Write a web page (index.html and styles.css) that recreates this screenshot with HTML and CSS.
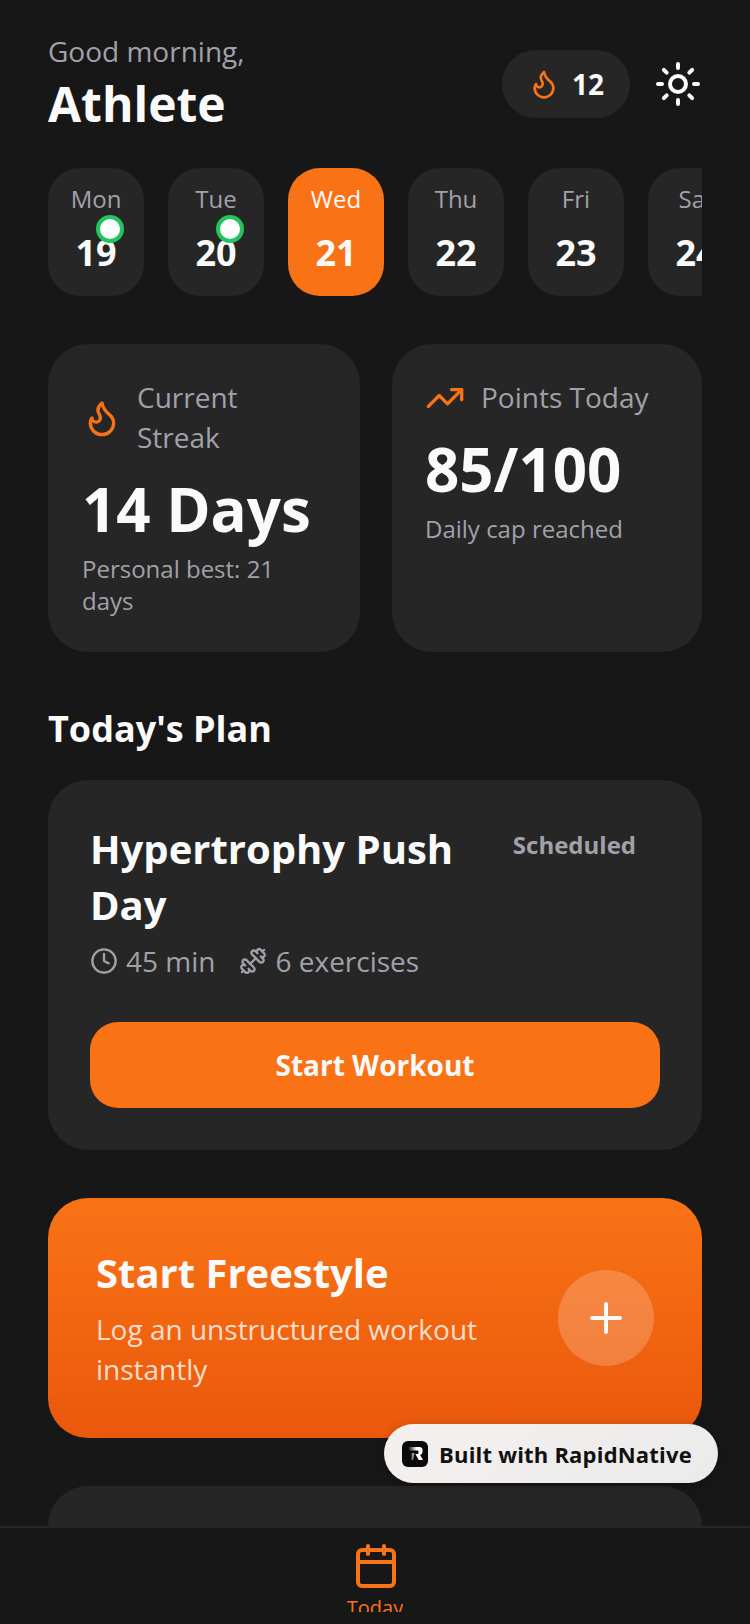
FILE: index.html
```html
<!DOCTYPE html>
<html lang="en">
<head>
<meta charset="utf-8">
<title>Today</title>
<link rel="stylesheet" href="styles.css">
</head>
<body>
<div class="app">
  <main class="content">
    <header class="header">
      <div class="greeting">
        <div class="greeting-top">Good morning,</div>
        <div class="greeting-name">Athlete</div>
      </div>
      <div class="header-actions">
        <div class="streak-pill">
          <svg class="icon i32 orange" viewBox="0 0 24 24"><path d="M8.5 14.5A2.5 2.5 0 0 0 11 12c0-1.38-.5-2-1-3-1.072-2.143-.224-4.054 2-6 .5 2.5 2 4.9 4 6.5 2 1.6 3 3.5 3 5.5a7 7 0 1 1-14 0c0-1.153.433-2.294 1-3a2.5 2.5 0 0 0 2.5 2.5z"/></svg>
          <span class="streak-count">12</span>
        </div>
        <svg class="icon i48 white" viewBox="0 0 24 24"><circle cx="12" cy="12" r="4"/><path d="M12 2v2"/><path d="M12 20v2"/><path d="m4.93 4.93 1.41 1.41"/><path d="m17.66 17.66 1.41 1.41"/><path d="M2 12h2"/><path d="M20 12h2"/><path d="m6.34 17.66-1.41 1.41"/><path d="m19.07 4.93-1.41 1.41"/></svg>
      </div>
    </header>

    <div class="days">
      <div class="day"><span class="day-label">Mon</span><span class="day-num">19</span><span class="day-dot"></span></div>
      <div class="day"><span class="day-label">Tue</span><span class="day-num">20</span><span class="day-dot"></span></div>
      <div class="day day-active"><span class="day-label">Wed</span><span class="day-num">21</span></div>
      <div class="day"><span class="day-label">Thu</span><span class="day-num">22</span></div>
      <div class="day"><span class="day-label">Fri</span><span class="day-num">23</span></div>
      <div class="day"><span class="day-label">Sat</span><span class="day-num">24</span></div>
    </div>

    <section class="stats">
      <div class="stat-card stat-card-wide">
        <div class="stat-head">
          <svg class="icon i40 orange" viewBox="0 0 24 24"><path d="M8.5 14.5A2.5 2.5 0 0 0 11 12c0-1.38-.5-2-1-3-1.072-2.143-.224-4.054 2-6 .5 2.5 2 4.9 4 6.5 2 1.6 3 3.5 3 5.5a7 7 0 1 1-14 0c0-1.153.433-2.294 1-3a2.5 2.5 0 0 0 2.5 2.5z"/></svg>
          <span class="stat-label">Current Streak</span>
        </div>
        <div class="stat-value">14 Days</div>
        <div class="stat-note">Personal best: 21 days</div>
      </div>
      <div class="stat-card stat-card-narrow">
        <div class="stat-head">
          <svg class="icon i40 orange" viewBox="0 0 24 24"><polyline points="22 7 13.5 15.5 8.5 10.5 2 17"/><polyline points="16 7 22 7 22 13"/></svg>
          <span class="stat-label">Points Today</span>
        </div>
        <div class="stat-value">85/100</div>
        <div class="stat-note">Daily cap reached</div>
      </div>
    </section>

    <h2 class="section-title">Today's Plan</h2>

    <section class="plan-card">
      <div class="plan-top">
        <h3 class="plan-title">Hypertrophy Push Day</h3>
        <span class="plan-status">Scheduled</span>
      </div>
      <div class="plan-meta">
        <div class="meta-item">
          <svg class="icon i28 gray" viewBox="0 0 24 24"><circle cx="12" cy="12" r="10"/><polyline points="12 6 12 12 16 14"/></svg>
          <span>45 min</span>
        </div>
        <div class="meta-item">
          <svg class="icon i28 gray" viewBox="0 0 24 24"><g transform="translate(24 0) scale(-1 1)"><path d="M14.4 14.4 9.6 9.6"/><path d="M18.657 21.485a2 2 0 1 1-2.829-2.828l-1.767 1.768a2 2 0 1 1-2.829-2.829l6.364-6.364a2 2 0 1 1 2.829 2.829l-1.768 1.767a2 2 0 1 1 2.828 2.829z"/><path d="m21.5 21.5-1.4-1.4"/><path d="M3.9 3.9 2.5 2.5"/><path d="M6.404 12.768a2 2 0 1 1-2.829-2.829l1.768-1.767a2 2 0 1 1-2.828-2.829l2.828-2.828a2 2 0 1 1 2.829 2.828l1.767-1.768a2 2 0 1 1 2.829 2.829z"/></g></svg>
          <span>6 exercises</span>
        </div>
      </div>
      <div class="plan-button">Start Workout</div>
    </section>

    <section class="freestyle">
      <div class="freestyle-text">
        <div class="freestyle-title">Start Freestyle</div>
        <div class="freestyle-sub">Log an unstructured workout instantly</div>
      </div>
      <div class="freestyle-add">
        <svg class="icon i48 white" viewBox="0 0 24 24"><path d="M5 12h14"/><path d="M12 5v14"/></svg>
      </div>
    </section>

    <section class="next-card"></section>
  </main>

  <nav class="tabbar">
    <svg class="icon i48 orange tab-icon" viewBox="0 0 24 24"><path d="M8 2v4"/><path d="M16 2v4"/><rect x="3" y="4" width="18" height="18" rx="2"/><path d="M3 10h18"/></svg>
    <span class="tab-label">Today</span>
  </nav>

  <div class="built-badge">
    <svg class="built-logo" viewBox="0 0 26 26">
      <defs><linearGradient id="rfade" x1="0" x2="1" y1="0" y2="0"><stop offset="0" stop-color="#222"/><stop offset="0.55" stop-color="#fff"/></linearGradient></defs>
      <rect width="26" height="26" rx="6" fill="#0a0a0a"/>
      <path d="M7 6h10.5a3 3 0 0 1 3 3v2a3 3 0 0 1-2.4 2.9l2.9 5.1h-4.3l-3.4-6h2.2a1 1 0 0 0 1-1v-1.6a1 1 0 0 0-1-1H7z M9.5 12h3l-1.5 7H9.5z" fill="url(#rfade)"/>
    </svg>
    <span class="built-text">Built with RapidNative</span>
  </div>
</div>
</body>
</html>
```

FILE: styles.css
```css
* { box-sizing: border-box; }

html, body {
  margin: 0;
  padding: 0;
  background: #171717;
}

body {
  font-family: "Open Sans", "Noto Sans", sans-serif;
  color: #fafafa;
}

.app {
  position: relative;
  width: 750px;
  height: 1624px;
  display: flex;
  flex-direction: column;
  overflow: hidden;
  background: #171717;
}

.content {
  flex: 1;
  min-height: 0;
  overflow: hidden;
  padding: 32px 48px 0;
}

.icon {
  flex-shrink: 0;
  display: block;
  fill: none;
  stroke: currentColor;
  stroke-width: 2;
  stroke-linecap: round;
  stroke-linejoin: round;
}
.i28 { width: 28px; height: 28px; }
.i32 { width: 32px; height: 32px; }
.i40 { width: 40px; height: 40px; }
.i48 { width: 48px; height: 48px; }
.orange { color: #f97316; }
.white { color: #fafafa; }
.gray { color: #a1a1aa; }

.header {
  display: flex;
  justify-content: space-between;
  align-items: center;
  margin-bottom: 32px;
}
.greeting-top {
  margin-top: -1px;
  margin-bottom: 1px;
  font-size: 28px;
  line-height: 40px;
  color: #a1a1aa;
}
.greeting-name {
  font-size: 48px;
  line-height: 64px;
  font-weight: 700;
}
.header-actions {
  display: flex;
  align-items: center;
  gap: 24px;
}
.streak-pill {
  display: flex;
  align-items: center;
  gap: 12px;
  padding: 14px 26px;
  border-radius: 34px;
  background: #262626;
}
.streak-count {
  font-size: 28px;
  line-height: 40px;
  font-weight: 700;
}

.days {
  display: flex;
  gap: 24px;
  overflow: hidden;
  margin-bottom: 48px;
}
.day {
  position: relative;
  flex: 0 0 96px;
  height: 128px;
  display: flex;
  flex-direction: column;
  align-items: center;
  padding-top: 15px;
  border-radius: 32px;
  background: #262626;
}
.day-label {
  font-size: 24px;
  line-height: 32px;
  color: #a1a1aa;
}
.day-num {
  margin-top: 14px;
  font-size: 36px;
  line-height: 48px;
  font-weight: 700;
}
.day-active { background: #f97316; }
.day-active .day-label { color: #fafafa; }
.day-dot {
  position: absolute;
  left: 48px;
  top: 47px;
  width: 28px;
  height: 28px;
  border-radius: 50%;
  background: #fff;
  border: 4px solid #22c55e;
}

.stats {
  display: flex;
  gap: 32px;
  margin-bottom: 48px;
}
.stat-card {
  min-width: 0;
  padding: 34px;
  border-radius: 40px;
  background: #262626;
}
.stat-card-wide { flex: 0 0 312px; }
.stat-card-wide .stat-head { gap: 15px; }
.stat-card-narrow { flex: 1; padding-left: 33px; }
.stat-head {
  display: flex;
  align-items: center;
  gap: 16px;
}
.stat-label {
  margin-top: -1px;
  margin-bottom: 1px;
  font-size: 28px;
  line-height: 40px;
  color: #a1a1aa;
}
.stat-value {
  margin-top: 11px;
  margin-bottom: 4px;
  font-size: 60px;
  line-height: 80px;
  font-weight: 700;
  white-space: nowrap;
}
.stat-note {
  margin-bottom: 1px;
  font-size: 24px;
  line-height: 32px;
  color: #a1a1aa;
}

.section-title {
  margin: 0 0 23px;
  padding-top: 1px;
  font-size: 36px;
  line-height: 56px;
  font-weight: 700;
}

.plan-card {
  padding: 42px;
  border-radius: 40px;
  background: #262626;
  margin-bottom: 48px;
}
.plan-top {
  display: flex;
  align-items: flex-start;
  justify-content: space-between;
}
.plan-title {
  flex: 1;
  margin: -1px 24px 1px 0;
  font-size: 40px;
  line-height: 56px;
  font-weight: 700;
}
.plan-status {
  padding: 7px 24px 9px;
  font-size: 24px;
  line-height: 32px;
  font-weight: 700;
  color: #a1a1aa;
}
.plan-meta {
  display: flex;
  gap: 24px;
  margin-top: 7px;
  margin-bottom: 41px;
}
.meta-item {
  display: flex;
  align-items: center;
  gap: 8px;
  font-size: 28px;
  line-height: 40px;
  color: #a1a1aa;
}
.plan-button {
  height: 86px;
  display: flex;
  align-items: center;
  justify-content: center;
  border-radius: 28px;
  background: #f97316;
  font-size: 28px;
  font-weight: 700;
}

.freestyle {
  display: flex;
  align-items: center;
  justify-content: space-between;
  padding: 48px;
  border-radius: 40px;
  background: linear-gradient(180deg, #f97316 0%, #ea580c 100%);
  margin-bottom: 48px;
}
.freestyle-text {
  flex: 1;
  min-width: 0;
  margin-top: -1px;
  margin-bottom: 1px;
  padding-right: 48px;
}
.freestyle-title {
  font-size: 40px;
  line-height: 56px;
  font-weight: 700;
  margin-bottom: 8px;
}
.freestyle-sub {
  font-size: 28px;
  line-height: 40px;
  color: rgba(255, 255, 255, 0.8);
}
.freestyle-add {
  flex: 0 0 96px;
  height: 96px;
  display: flex;
  align-items: center;
  justify-content: center;
  border-radius: 50%;
  background: rgba(255, 255, 255, 0.2);
}

.next-card {
  height: 240px;
  border-radius: 40px;
  background: #262626;
}

.tabbar {
  flex: 0 0 98px;
  display: flex;
  flex-direction: column;
  align-items: center;
  padding-top: 14px;
  border-top: 2px solid #262626;
  background: #171717;
}
.tab-icon { margin-left: 2px; }
.tab-label {
  display: block;
  height: 19px;
  margin-top: 3px;
  overflow: hidden;
  font-size: 20px;
  line-height: 30px;
  color: #f97316;
}

.built-badge {
  position: absolute;
  left: 384px;
  top: 1424px;
  width: 334px;
  height: 59px;
  display: flex;
  align-items: center;
  gap: 11px;
  padding-left: 18px;
  border-radius: 30px;
  background: linear-gradient(135deg, #f5f0ee 0%, #ebebeb 100%);
  box-shadow: 0 2px 8px rgba(0, 0, 0, 0.25);
}
.built-logo {
  width: 26px;
  height: 26px;
  flex-shrink: 0;
}
.built-text {
  font-size: 22px;
  line-height: 32px;
  font-weight: 700;
  letter-spacing: 0.2px;
  color: #111;
  white-space: nowrap;
}
```
